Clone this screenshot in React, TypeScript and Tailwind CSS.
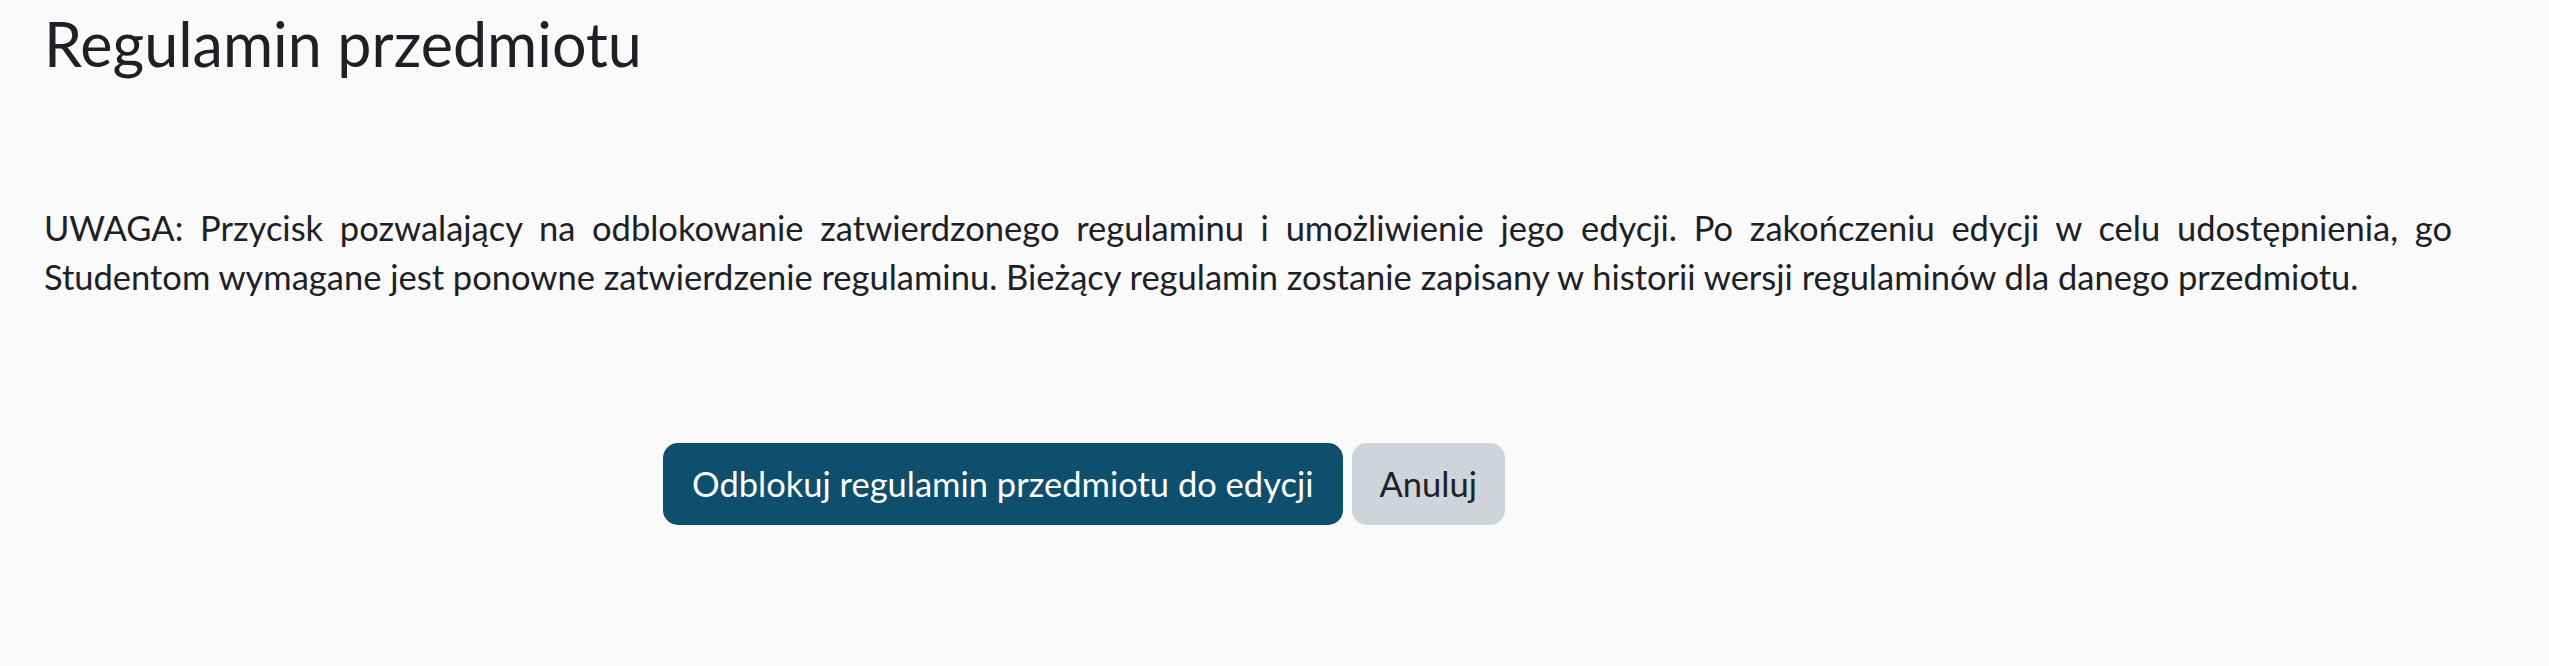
export default function App() {
  return (
    <div className="min-h-[666px] bg-[#fafafa] text-[#1d2125] font-['Lato',sans-serif]">
      <div className="pl-[44px] pr-[97px]">
        <h1 className="pt-[7px] text-[61px] leading-[1.2] font-normal">Regulamin przedmiotu</h1>

        <p className="mt-[123px] text-[34.5px] leading-[49px]">
          <span className="block text-justify [text-align-last:justify]">
            UWAGA: Przycisk pozwalający na odblokowanie zatwierdzonego regulaminu i umożliwienie jego edycji. Po
            zakończeniu edycji w celu udostępnienia, go
          </span>
          <span className="block">
            Studentom wymagane jest ponowne zatwierdzenie regulaminu. Bieżący regulamin zostanie zapisany w historii
            wersji regulaminów dla danego przedmiotu.
          </span>
        </p>

        <div className="mt-[142px] ml-[619px] flex items-center gap-[9px]">
          <button className="h-[82px] px-[29px] rounded-[15px] bg-[#0d4f6c] text-white text-[34.5px] leading-none flex items-center">
            Odblokuj regulamin przedmiotu do edycji
          </button>
          <button className="h-[82px] px-[28px] rounded-[15px] bg-[#ced4da] text-[#1d2125] text-[34.5px] leading-none flex items-center">
            Anuluj
          </button>
        </div>
      </div>
    </div>
  );
}
